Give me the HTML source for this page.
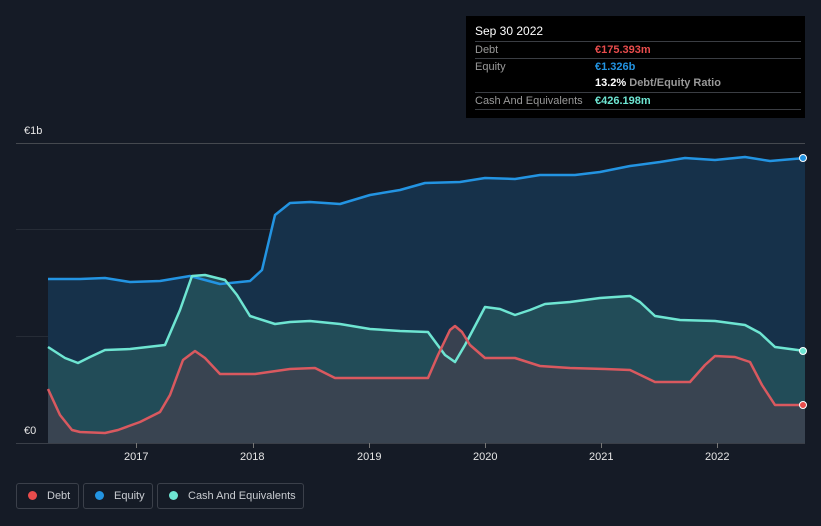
<!DOCTYPE html>
<html><head><meta charset="utf-8"><style>
html,body{margin:0;width:821px;height:526px;overflow:hidden}
body{background:#151b26;font-family:"Liberation Sans",sans-serif;position:relative}
.tt{position:absolute;left:466px;top:16px;width:339px;height:102px;background:#000;color:#fff;font-size:11px}
.tt .h{position:absolute;left:9px;top:8px;font-size:12px}
.row{position:absolute;left:9px;width:326px;height:17px;line-height:16px;border-top:1px solid #3a3d43;color:#999;white-space:nowrap}
.row span{position:absolute;left:120px;top:0;font-weight:bold}
.lg{position:absolute;top:483px;height:26px;border:1px solid #3b404a;border-radius:3px;color:#c9ccd1;font-size:11px;line-height:24px;box-sizing:border-box;white-space:nowrap}
.lg i{display:inline-block;width:9px;height:9px;border-radius:50%;margin:0 10px 0 11px;vertical-align:-1px}
.ax{position:absolute;color:#e6e6e6;font-size:11px}
</style></head><body>
<svg width="821" height="526" style="position:absolute;left:0;top:0">
<line x1="16" y1="143.5" x2="805" y2="143.5" stroke="#45494f"/>
<line x1="16" y1="229.5" x2="805" y2="229.5" stroke="#262c36"/>
<line x1="16" y1="336.5" x2="805" y2="336.5" stroke="#262c36"/>
<path d="M48,279 L80,279 L105,278 L130,282 L160,281 L190,276 L220,284 L250,281 L262,270 L275,215 L290,203 L310,202 L340,204 L370,195 L400,190 L425,183 L460,182 L485,178 L515,179 L540,175 L575,175 L600,172 L630,166 L660,162 L685,158 L715,160 L745,157 L770,161 L805,158 L805,443 L48,443Z" fill="#16314a"/>
<path d="M48,347 L65,358 L78,363 L90,357 L105,350 L130,349 L165,345 L180,310 L192,276 L205,275 L225,280 L237,295 L250,316 L275,324 L290,322 L310,321 L340,324 L370,329 L400,331 L428,332 L445,355 L455,362 L465,345 L485,307 L500,309 L515,315 L530,310 L545,304 L570,302 L600,298 L630,296 L640,302 L655,316 L680,320 L715,321 L745,325 L760,333 L775,347 L805,351 L805,443 L48,443Z" fill="#24505a" opacity="0.9"/>
<path d="M48,389 L60,415 L72,430 L80,432 L105,433 L118,430 L140,422 L160,412 L170,395 L183,360 L195,351 L205,358 L220,374 L255,374 L290,369 L315,368 L335,378 L370,378 L428,378 L438,355 L450,330 L455,326 L462,332 L470,345 L485,358 L515,358 L540,366 L570,368 L605,369 L630,370 L655,382 L690,382 L705,365 L715,356 L735,357 L750,362 L762,385 L775,405 L805,405 L805,443 L48,443Z" fill="#3c4451" opacity="0.9"/>
<g fill="none" stroke-width="2.5" stroke-linejoin="round">
<path d="M48,279 L80,279 L105,278 L130,282 L160,281 L190,276 L220,284 L250,281 L262,270 L275,215 L290,203 L310,202 L340,204 L370,195 L400,190 L425,183 L460,182 L485,178 L515,179 L540,175 L575,175 L600,172 L630,166 L660,162 L685,158 L715,160 L745,157 L770,161 L805,158" stroke="#2394e2"/>
<path d="M48,347 L65,358 L78,363 L90,357 L105,350 L130,349 L165,345 L180,310 L192,276 L205,275 L225,280 L237,295 L250,316 L275,324 L290,322 L310,321 L340,324 L370,329 L400,331 L428,332 L445,355 L455,362 L465,345 L485,307 L500,309 L515,315 L530,310 L545,304 L570,302 L600,298 L630,296 L640,302 L655,316 L680,320 L715,321 L745,325 L760,333 L775,347 L805,351" stroke="#6ee5d2"/>
<path d="M48,389 L60,415 L72,430 L80,432 L105,433 L118,430 L140,422 L160,412 L170,395 L183,360 L195,351 L205,358 L220,374 L255,374 L290,369 L315,368 L335,378 L370,378 L428,378 L438,355 L450,330 L455,326 L462,332 L470,345 L485,358 L515,358 L540,366 L570,368 L605,369 L630,370 L655,382 L690,382 L705,365 L715,356 L735,357 L750,362 L762,385 L775,405 L805,405" stroke="#d9595f"/>
</g>
<line x1="16" y1="443.5" x2="805" y2="443.5" stroke="#3a3f48"/>
<g stroke="#777"><line x1="136.5" y1="443" x2="136.5" y2="448"/><line x1="253.5" y1="443" x2="253.5" y2="448"/><line x1="369.5" y1="443" x2="369.5" y2="448"/><line x1="485.5" y1="443" x2="485.5" y2="448"/><line x1="601.5" y1="443" x2="601.5" y2="448"/><line x1="717.5" y1="443" x2="717.5" y2="448"/></g>
<circle cx="803" cy="158" r="3.5" fill="#2394e2" stroke="#fff" stroke-width="1"/>
<circle cx="803" cy="351" r="3.5" fill="#6ee5d2" stroke="#fff" stroke-width="1"/>
<circle cx="803" cy="405" r="3.5" fill="#e84c4c" stroke="#fff" stroke-width="1"/>
</svg>
<div class="ax" style="left:24px;top:125px">€1b</div>
<div class="ax" style="left:24px;top:425px">€0</div>
<div class="ax" style="left:124px;top:451px">2017</div>
<div class="ax" style="left:240px;top:451px">2018</div>
<div class="ax" style="left:357px;top:451px">2019</div>
<div class="ax" style="left:473px;top:451px">2020</div>
<div class="ax" style="left:589px;top:451px">2021</div>
<div class="ax" style="left:705px;top:451px">2022</div>
<div class="tt"><div class="h">Sep 30 2022</div>
<div class="row" style="top:25px">Debt<span style="color:#e84c4c">€175.393m</span></div>
<div class="row" style="top:42px">Equity<span style="color:#2394e2">€1.326b</span></div>
<div class="row" style="top:59px;border-top:none"><span style="color:#fff">13.2% <b style="color:#999">Debt/Equity Ratio</b></span></div>
<div class="row" style="top:76px">Cash And Equivalents<span style="color:#6ee5d2">€426.198m</span></div>
<div class="row" style="top:93px;height:0"></div>
</div>
<div class="lg" style="left:16px;width:63px"><i style="background:#e84c4c"></i>Debt</div>
<div class="lg" style="left:83px;width:70px"><i style="background:#2394e2"></i>Equity</div>
<div class="lg" style="left:157px;width:147px"><i style="background:#6ee5d2"></i>Cash And Equivalents</div>
</body></html>
